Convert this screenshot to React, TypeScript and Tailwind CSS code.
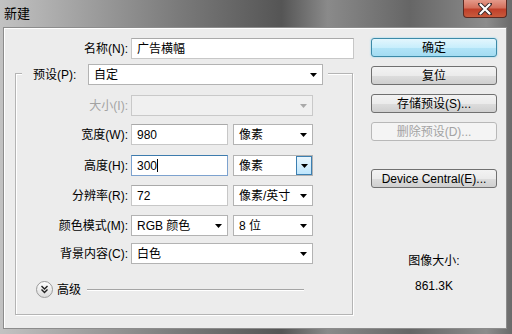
import React from "react"

function Arrow({ disabled }: { disabled?: boolean }) {
  return (
    <svg width="7" height="4" viewBox="0 0 7 4" className="shrink-0">
      <polygon points="0,0 7,0 3.5,4" fill={disabled ? "#a9a9a9" : "#000"} />
    </svg>
  )
}

function Select({ className, value, disabled, hover }: { className: string; value?: string; disabled?: boolean; hover?: boolean }) {
  return (
    <div
      className={
        "h-[21px] flex items-center border " +
        (disabled ? "bg-[#f0f0f0] border-[#c9c9c9] " : "bg-white border-[#b3b3b3] ") +
        className
      }
    >
      <span className="flex-1 pl-[5px] truncate">{value}</span>
      {hover ? (
        <div className="h-full w-[16px] flex items-center justify-center border border-[#3c7fb1] bg-[linear-gradient(#eaf6fd,#bee6fd)]">
          <Arrow />
        </div>
      ) : (
        <div className="w-[17px] flex items-center justify-center">
          <Arrow disabled={disabled} />
        </div>
      )}
    </div>
  )
}

function Input({ className, value, focused }: { className: string; value: string; focused?: boolean }) {
  return (
    <div
      className={
        "h-[21px] flex items-center bg-white border pl-[5px] " +
        (focused ? "border-[#7da2ce] border-t-[#3d7bad] " : "border-[#c7c7c7] border-t-[#a9a9a9] ") +
        className
      }
    >
      {value}
      {focused && <span className="w-px h-[13px] bg-black" />}
    </div>
  )
}

function Row({ label, children, className, disabled }: { label: string; children: React.ReactNode; className: string; disabled?: boolean }) {
  return (
    <div className={"flex items-center " + className}>
      <span className={"w-[112px] text-right mr-[3px] " + (disabled ? "text-[#a3a3a3]" : "")}>{label}</span>
      {children}
    </div>
  )
}

function Button({ children, primary, disabled, className }: { children: React.ReactNode; primary?: boolean; disabled?: boolean; className: string }) {
  let look = "border-[#707070] bg-[linear-gradient(#f3f3f3_0%,#ebebeb_50%,#dddddd_51%,#cfcfcf_100%)]"
  if (primary) look = "border-[#3c8aa8] bg-[linear-gradient(#e3f6fd_0%,#c8eefc_50%,#b2e4f7_51%,#a3dcf2_100%)] shadow-[0_0_2px_#7fd0f0]"
  if (disabled) look = "border-[#b8b8b8] bg-[#f4f4f4] text-[#a3a3a3]"
  return (
    <div className={"h-[19px] w-[126px] rounded-[3px] border flex items-center justify-center " + look + " " + className}>
      {children}
    </div>
  )
}

export default function App() {
  return (
    <div className="w-[512px] h-[334px] flex flex-col overflow-hidden text-[12px] leading-[14px] text-black font-['Liberation_Sans','Noto_Sans_CJK_SC',sans-serif] bg-[linear-gradient(to_right,#c2c2c2_0%,#a3a3a3_15%,#7a7a7a_35%,#555555_55%,#8a8a8a_64%,#666666_80%,#8c8c8c_95%,#6a6a6a_100%)]">
      {/* title bar */}
      <div className="h-[27px] flex items-start shrink-0">
        <span className="ml-[4px] mt-[6px] text-[13px] leading-[15px] text-black">新建</span>
        <div className="ml-auto mr-[5px] w-[44px] h-[18px] rounded-b-[4px] border border-t-0 border-[#5a2a22] bg-[linear-gradient(#e49a8a_0%,#d4705c_45%,#c0402a_55%,#c85a3c_100%)] flex items-center justify-center">
          <svg width="14" height="12" viewBox="0 0 14 12">
            <path d="M2 1 L12 11 M12 1 L2 11" stroke="#3a2a2a" strokeWidth="4" strokeLinecap="round" />
            <path d="M2.5 1.5 L11.5 10.5 M11.5 1.5 L2.5 10.5" stroke="#fff" strokeWidth="2.2" strokeLinecap="round" />
          </svg>
        </div>
      </div>

      {/* client area */}
      <div className="h-[302px] ml-[3px] mr-[5px] flex bg-[#ececec] border border-[#8c8c8c] shadow-[inset_1px_1px_0_#ffffff]">
        {/* form column */}
        <div className="w-[356px] flex flex-col">
          <div className="flex items-center mt-[10px]">
            <span className="w-[124px] text-right mr-[3px]">名称(N):</span>
            <Input className="w-[223px]" value="广告横幅" />
          </div>

          <div className="ml-[11px] mt-[14px] w-[338px] h-[242px] border border-[#b4b4b4] shadow-[inset_1px_1px_0_#ffffff,1px_1px_0_#ffffff] flex flex-col">
            <div className="-mt-[10px] ml-[6px] self-start flex items-center bg-[#ececec] pl-[11px] pr-[5px]">
              <span className="w-[55px]">预设(P):</span>
              <Select className="w-[235px]" value="自定" />
            </div>

            <Row label="大小(I):" className="mt-[10px]" disabled>
              <Select className="w-[182px]" disabled />
            </Row>
            <Row label="宽度(W):" className="mt-[8px]">
              <Input className="w-[97px]" value="980" />
              <Select className="w-[80px] ml-[5px]" value="像素" />
            </Row>
            <Row label="高度(H):" className="mt-[10px]">
              <Input className="w-[97px]" value="300" focused />
              <Select className="w-[80px] ml-[5px]" value="像素" hover />
            </Row>
            <Row label="分辨率(R):" className="mt-[9px]">
              <Input className="w-[97px]" value="72" />
              <Select className="w-[80px] ml-[5px]" value="像素/英寸" />
            </Row>
            <Row label="颜色模式(M):" className="mt-[9px]">
              <Select className="w-[97px]" value="RGB 颜色" />
              <Select className="w-[80px] ml-[5px]" value="8 位" />
            </Row>
            <Row label="背景内容(C):" className="mt-[7px]">
              <Select className="w-[182px]" value="白色" />
            </Row>

            <div className="flex items-center mt-[17px] ml-[20px]">
              <div className="w-[17px] h-[17px] rounded-full border border-[#9a9a9a] bg-[linear-gradient(#ffffff,#dcdcdc)] flex items-center justify-center">
                <svg width="9" height="9" viewBox="0 0 9 9">
                  <path d="M1.5 1 L4.5 4 L7.5 1 M1.5 4.5 L4.5 7.5 L7.5 4.5" stroke="#222" strokeWidth="1.4" fill="none" />
                </svg>
              </div>
              <span className="ml-[4px]">高级</span>
              <div className="flex-1 ml-[6px] mr-[48px] h-[2px] border-t border-[#a5a5a5] border-b border-b-white" />
            </div>
          </div>
        </div>

        {/* buttons column */}
        <div className="flex flex-col pl-[11px]">
          <Button primary className="mt-[10px]">确定</Button>
          <Button className="mt-[9px]">复位</Button>
          <Button className="mt-[9px]">存储预设(S)...</Button>
          <Button disabled className="mt-[9px]">删除预设(D)...</Button>
          <Button className="mt-[28px]">Device Central(E)...</Button>
          <div className="mt-[66px] w-[126px] text-center leading-[15px]">图像大小:</div>
          <div className="mt-[10px] w-[126px] text-center leading-[15px]">861.3K</div>
        </div>
      </div>
    </div>
  )
}
